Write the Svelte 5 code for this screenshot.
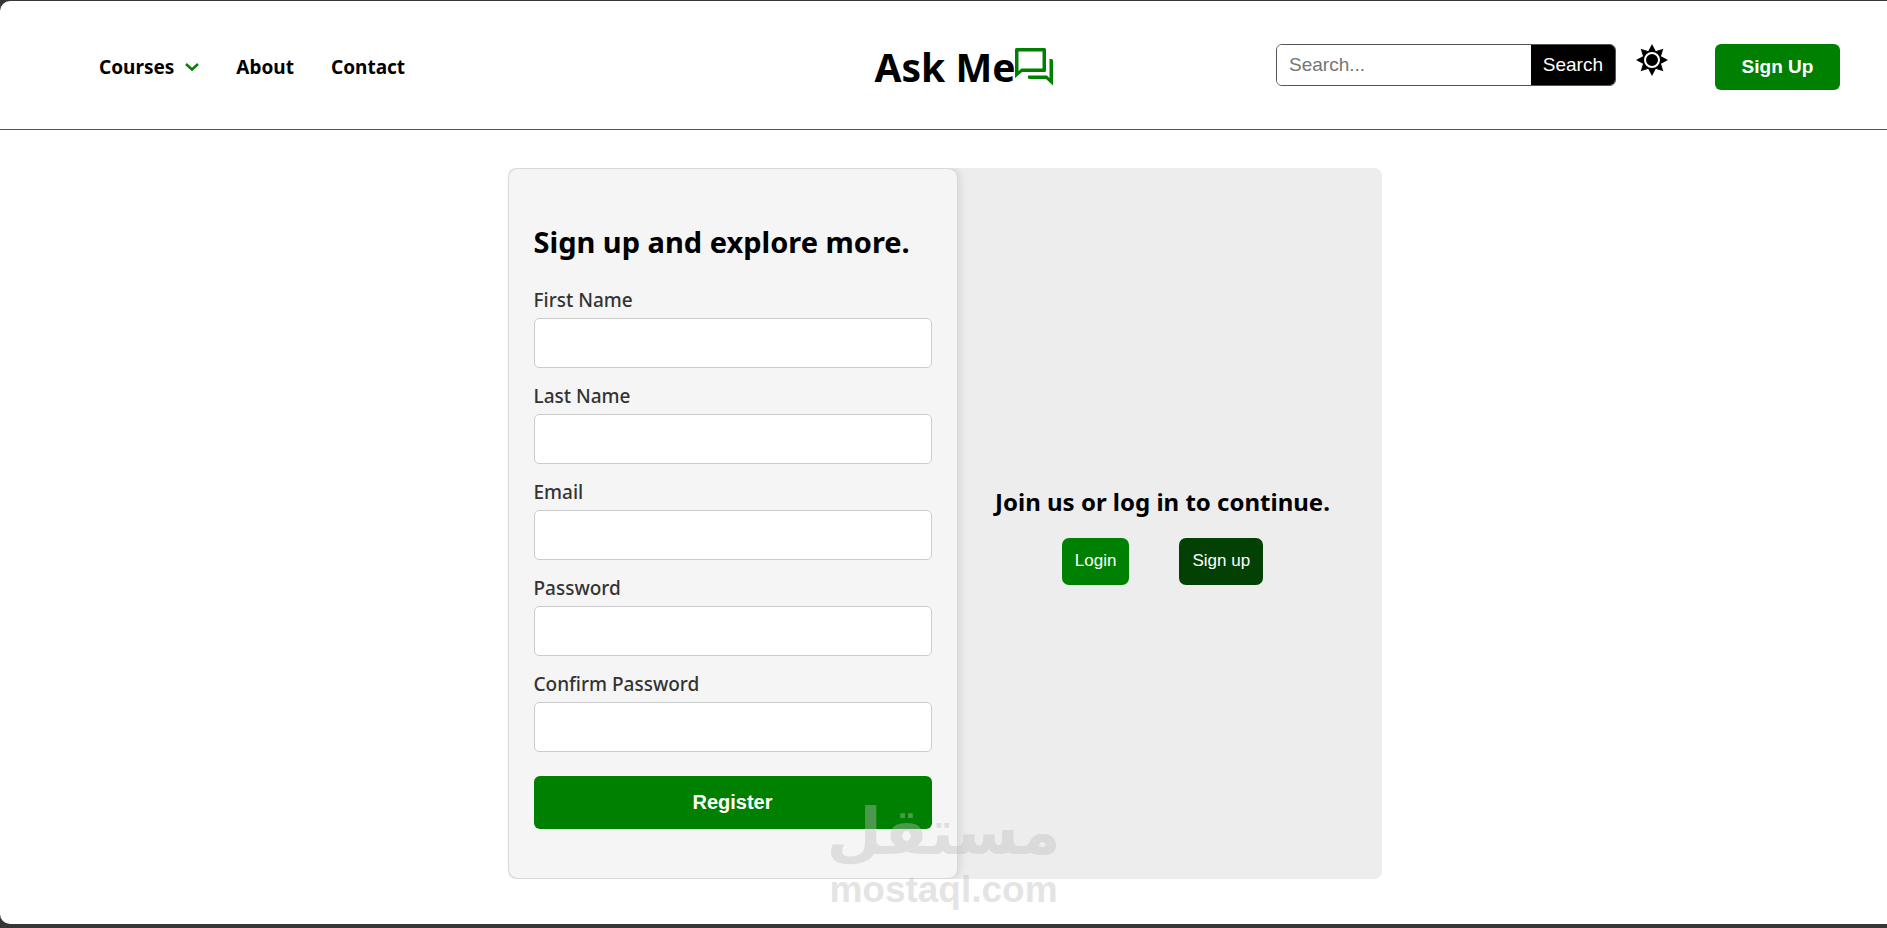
<script lang="ts">
	interface Field {
		id: string;
		label: string;
		type: string;
	}

	const fields: Field[] = [
		{ id: 'first-name', label: 'First Name', type: 'text' },
		{ id: 'last-name', label: 'Last Name', type: 'text' },
		{ id: 'email', label: 'Email', type: 'email' },
		{ id: 'password', label: 'Password', type: 'password' },
		{ id: 'confirm-password', label: 'Confirm Password', type: 'password' }
	];

	let query = $state('');

	function submit(event: SubmitEvent) {
		event.preventDefault();
	}
</script>

<div class="shell">
	<div class="page">
		<header>
			<nav>
				<a href="#courses">
					Courses
					<svg class="chevron" viewBox="0 0 14 14" width="14" height="14" aria-hidden="true">
						<path d="M1 4 7 9.5 13 4" fill="none" stroke="green" stroke-width="2.4" />
					</svg>
				</a>
				<a href="#about">About</a>
				<a href="#contact">Contact</a>
			</nav>

			<a class="logo" href="#home">
				Ask Me
				<svg viewBox="0 0 38 38" width="38" height="38" aria-hidden="true">
					<path
						fill="green"
						fill-rule="evenodd"
						d="M1.500 0H29.500Q31 0 31 1.500V22.500Q31 24 29.500 24H7L0 30V1.500Q0 0 1.500 0ZM3.500 3.500V23L6.500 20.500H27.500V3.500Z"
					/>
					<path fill="green" d="M34.500 11H36.500Q38 11 38 12.500V37.500L31 31H14.500Q13 31 13 29.500V27.500H32L34.500 30Z" />
				</svg>
			</a>

			<div class="tools">
				<form class="search" onsubmit={submit}>
					<input type="search" placeholder="Search..." aria-label="Search" bind:value={query} />
					<button type="submit">Search</button>
				</form>
				<button class="theme" type="button" aria-label="Toggle theme">
					<svg viewBox="-16 -16 32 32" width="32" height="32" aria-hidden="true">
						{#each [0, 45, 90, 135, 180, 225, 270, 315] as angle}
							<path d="M-4 -8 -3.400 -9.500 0 -16 3.400 -9.500 4 -8Z" transform="rotate({angle})" />
						{/each}
						<circle r="9.600" />
						<circle r="7" fill="none" stroke="#fff" stroke-width="2" />
					</svg>
				</button>
				<button class="signup" type="button">Sign Up</button>
			</div>
		</header>

		<main>
			<div class="card">
				<form class="register" onsubmit={submit}>
					<h1>Sign up and explore more.</h1>
					<div class="fields">
						{#each fields as field (field.id)}
							<div class="field">
								<label for={field.id}>{field.label}</label>
								<input id={field.id} type={field.type} />
							</div>
						{/each}
					</div>
					<button type="submit">Register</button>
				</form>

				<section class="join">
					<h2>Join us or log in to continue.</h2>
					<div class="choices">
						<button type="button">Login</button>
						<button class="dark" type="button">Sign up</button>
					</div>
				</section>
			</div>
		</main>

		<div class="watermark">
			<span class="word" lang="ar" dir="rtl">مستقل</span>
			<span class="domain">mostaql.com</span>
		</div>
	</div>
</div>

<style>
	:global(body) {
		margin: 0;
		background: #363636;
	}

	.shell {
		box-sizing: border-box;
		min-height: 100vh;
		padding: 1px 0 4px;
		display: flex;
		flex-direction: column;
		font-family: 'Segoe UI', 'Noto Sans', sans-serif;
		color: #000;
	}

	.page {
		position: relative;
		flex: 1;
		background: #fff;
		border-radius: 10px 0 0 10px;
	}

	button,
	input {
		font-family: 'Liberation Sans', Arial, sans-serif;
		box-sizing: border-box;
	}

	button {
		border: none;
		color: #fff;
		background: green;
		cursor: pointer;
	}

	header {
		box-sizing: border-box;
		display: grid;
		grid-template-columns: 1fr auto 1fr;
		align-items: center;
		height: 129px;
		padding: 4px 47px 0 88px;
		border-bottom: 1px solid #555;
	}

	nav {
		display: flex;
		gap: 37px;
		padding-left: 11px;
	}

	a {
		color: inherit;
		text-decoration: none;
		font-weight: 700;
	}

	nav a {
		display: flex;
		align-items: center;
		gap: 11px;
		font-size: 19px;
	}

	.logo {
		display: flex;
		align-items: center;
		font-size: 39px;
		line-height: 50px;
	}

	.tools {
		display: flex;
		justify-content: flex-end;
		align-items: flex-start;
	}

	.search {
		display: flex;
		box-sizing: border-box;
		width: 340px;
		height: 42px;
		border: 1px solid #555;
		border-radius: 6px;
		overflow: hidden;
	}

	.search input {
		flex: 1;
		min-width: 0;
		padding: 0 12px;
		border: none;
		outline: none;
		font-size: 19px;
	}

	.search button {
		padding: 0 12px;
		background: #000;
		font-size: 19px;
	}

	.theme {
		padding: 0;
		margin: 0 47px 0 20px;
		background: none;
	}

	.theme svg {
		display: block;
	}

	.signup {
		width: 125px;
		height: 46px;
		border-radius: 6px;
		font-size: 19px;
		font-weight: 700;
	}

	main {
		display: flex;
		justify-content: center;
		padding: 38px 0 44px 2px;
	}

	.card {
		display: flex;
		width: 874px;
		background: #ededed;
		border-radius: 8px;
	}

	.register {
		box-sizing: border-box;
		width: 450px;
		padding: 53px 25px 49px;
		background: #f5f5f5;
		border: 1px solid #d8d8d8;
		border-radius: 10px;
		box-shadow: 2px 0 8px rgba(0, 0, 0, 0.1);
		clip-path: inset(0 -12px 0 0);
	}

	h1,
	h2 {
		margin: 0;
		font-weight: 700;
	}

	h1 {
		font-size: 29px;
		line-height: 40px;
	}

	.fields {
		display: flex;
		flex-direction: column;
		gap: 16px;
		padding: 26px 0 24px;
	}

	.field {
		display: flex;
		flex-direction: column;
		gap: 6px;
	}

	label {
		color: #333;
		font-size: 19px;
		font-weight: 500;
		line-height: 24px;
	}

	.field input {
		height: 50px;
		padding: 0 12px;
		border: 1px solid #ccc;
		border-radius: 5px;
		background: #fff;
		font-size: 19px;
	}

	.register button {
		width: 100%;
		height: 53px;
		border-radius: 6px;
		font-size: 20px;
		font-weight: 700;
	}

	.join {
		flex: 1;
		display: flex;
		flex-direction: column;
		align-items: center;
		justify-content: center;
		gap: 19px;
		padding: 22px 14px 0 0;
	}

	h2 {
		font-size: 24px;
		line-height: 34px;
	}

	.choices {
		display: flex;
		gap: 50px;
	}

	.choices button {
		height: 47px;
		padding: 0 13px;
		border-radius: 7px;
		font-size: 17px;
	}

	.choices .dark {
		background: #034003;
	}

	.watermark {
		position: absolute;
		left: 0;
		right: 0;
		bottom: 14px;
		display: flex;
		flex-direction: column;
		align-items: center;
		color: #bebebe;
		font-weight: 700;
		opacity: 0.4;
		pointer-events: none;
	}

	.word {
		font-family: 'DejaVu Sans', sans-serif;
		font-size: 64px;
		line-height: 76px;
	}

	.domain {
		font-family: 'Liberation Sans', Arial, sans-serif;
		font-size: 37px;
		line-height: 40px;
	}
</style>
